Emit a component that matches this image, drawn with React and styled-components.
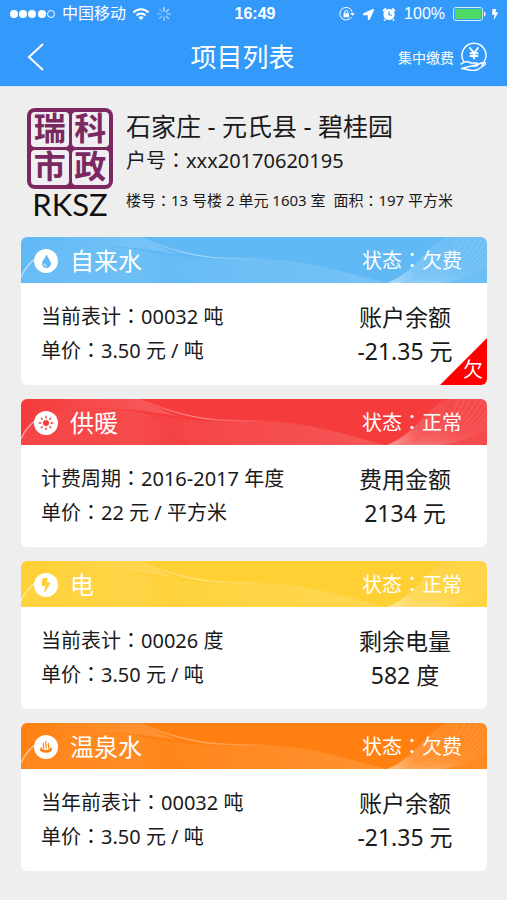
import React from 'react';
import styled, { createGlobalStyle } from 'styled-components';
import { FaTint, FaBolt, FaLocationArrow } from 'react-icons/fa';

const GlobalStyle = createGlobalStyle`
  * {
    box-sizing: border-box;
  }

  body {
    margin: 0;
    background: #eeeeee;
    color: #1a1a1a;
    font-family: 'Noto Sans', 'Noto Sans CJK SC', sans-serif;
  }

  h1, h2, p {
    margin: 0;
    font-weight: 400;
  }
`;

const Page = styled.div`
  min-height: 100vh;
  background: #eeeeee;
`;

const TopArea = styled.header`
  background: #3399fb;
  border-bottom: 1px solid #d5e6f8;
  color: #ffffff;
`;

const StatusBar = styled.div`
  display: grid;
  grid-template-columns: 1fr auto 1fr;
  align-items: center;
  height: 28px;
  padding: 0 7px 0 10px;
  font-family: 'Liberation Sans', 'Noto Sans CJK SC', sans-serif;
  font-size: 16px;
  line-height: 24px;
`;

const StatusGroup = styled.div`
  display: flex;
  align-items: center;
  justify-content: ${({ $end }) => ($end ? 'flex-end' : 'flex-start')};
  gap: ${({ $end }) => ($end ? '8px' : '6px')};
`;

const BatteryGroup = styled.span`
  display: flex;
  align-items: center;
  gap: 4px;
`;

const Clock = styled.strong`
  font-size: 16px;
`;

const NavBar = styled.nav`
  display: flex;
  align-items: center;
  justify-content: space-between;
  height: 58px;
  padding: 0 19px 0 20px;
`;

const NavButton = styled.button`
  display: flex;
  align-items: center;
  gap: 6px;
  min-width: 67px;
  padding: 0 0 0 ${({ $inset }) => ($inset ? '7px' : '0')};
  border: 0;
  background: none;
  color: inherit;
  font: inherit;
  font-size: 14px;
  cursor: pointer;
`;

const Title = styled.h1`
  font-size: 26px;
  line-height: 40px;
`;

const Main = styled.main`
  padding: 21px 20px 29px 21px;
`;

const Summary = styled.section`
  display: flex;
  gap: 13px;
  padding-left: 6px;
  margin-bottom: 18px;
`;

const Brand = styled.div`
  width: 86px;
  text-align: center;
`;

const Seal = styled.div`
  display: grid;
  grid-template-columns: 1fr 1fr;
  gap: 3px;
  padding: 4px;
  border-radius: 8px;
  background: #7b2860;
`;

const SealCell = styled.span`
  border-radius: 4px;
  background: #f0eef0;
  color: #7b2860;
  font-family: 'Liberation Sans', 'Noto Sans CJK SC', sans-serif;
  font-size: 32px;
  font-weight: 700;
  line-height: 35px;
`;

const BrandName = styled.p`
  color: #111111;
  font-family: Lato, sans-serif;
  font-size: 31px;
  line-height: 30px;
`;

const Place = styled.div`
  flex: 1;
`;

const PlaceName = styled.h2`
  font-size: 25px;
  line-height: 36px;
`;

const Account = styled.p`
  font-size: 20px;
  line-height: 34px;
`;

const Address = styled.p`
  margin-top: 8px;
  font-size: 15px;
  line-height: 28px;
  white-space: pre-wrap;
`;

const CardList = styled.div`
  display: flex;
  flex-direction: column;
  gap: 14px;
`;

const Card = styled.article`
  position: relative;
  overflow: hidden;
  border-radius: 6px;
  background: #ffffff;
`;

const CardHead = styled.div`
  position: relative;
  display: flex;
  align-items: center;
  height: 46px;
  padding: 2px 25px 0 13px;
  background: ${({ $color }) => $color};
  color: #ffffff;
`;

const WaveArt = styled.svg`
  position: absolute;
  inset: 0;
  width: 100%;
  height: 100%;
`;

const IconBadge = styled.span`
  position: relative;
  display: flex;
  align-items: center;
  justify-content: center;
  width: 24px;
  height: 24px;
  margin-right: 12px;
  border-radius: 50%;
  background: #ffffff;
  color: ${({ $color }) => $color};
`;

const CardTitle = styled.h2`
  position: relative;
  flex: 1;
  font-size: 24px;
  line-height: 36px;
`;

const CardStatus = styled.p`
  position: relative;
  font-size: 20px;
  line-height: 36px;
`;

const CardBody = styled.div`
  display: flex;
  justify-content: space-between;
  padding: 17px 0 17px 20px;
`;

const Details = styled.div`
  font-size: 20px;
  line-height: 34px;
`;

const Balance = styled.div`
  width: 164px;
  font-size: 23px;
  line-height: 34px;
  text-align: center;
`;

const OverdueCorner = styled.span`
  position: absolute;
  right: 0;
  bottom: 0;
  width: 47px;
  height: 47px;
  padding: 18px 4px 0 0;
  background: #fe0000;
  clip-path: polygon(100% 0, 100% 100%, 0 100%);
  color: #ffffff;
  font-size: 20px;
  line-height: 28px;
  text-align: right;
`;

// the full-width colon sits in the middle of its box in the TC face
const Colon = styled.span`
  font-family: 'Noto Sans CJK TC', sans-serif;
  line-height: 1;
`;

const Field = ({ label, children }) => (
  <>
    {label}
    <Colon>：</Colon>
    {children}
  </>
);

const Waves = ({ id }) => (
  <WaveArt viewBox="0 0 466 46" preserveAspectRatio="none" aria-hidden="true">
    <defs>
      <linearGradient id={`${id}-left`} x1="0" y1="0" x2="1" y2="0">
        <stop offset="0" stopColor="#fff" stopOpacity="0.05" />
        <stop offset="0.7" stopColor="#fff" stopOpacity="0.08" />
        <stop offset="1" stopColor="#fff" stopOpacity="0.02" />
      </linearGradient>
      <linearGradient id={`${id}-top`} x1="0" y1="0" x2="1" y2="0">
        <stop offset="0" stopColor="#fff" stopOpacity="0" />
        <stop offset="1" stopColor="#fff" stopOpacity="0.18" />
      </linearGradient>
      <linearGradient id={`${id}-mid`} x1="0" y1="0" x2="1" y2="0">
        <stop offset="0" stopColor="#fff" stopOpacity="0.04" />
        <stop offset="1" stopColor="#fff" stopOpacity="0.14" />
      </linearGradient>
      <linearGradient id={`${id}-edge`} x1="0" y1="0" x2="1" y2="0">
        <stop offset="0" stopColor="#fff" stopOpacity="0.1" />
        <stop offset="0.5" stopColor="#fff" stopOpacity="0.4" />
        <stop offset="1" stopColor="#fff" stopOpacity="0.05" />
      </linearGradient>
      <radialGradient id={`${id}-ray`} gradientUnits="userSpaceOnUse" cx="368" cy="46" r="70">
        <stop offset="0" stopColor="#fff" stopOpacity="0.5" />
        <stop offset="0.4" stopColor="#fff" stopOpacity="0.18" />
        <stop offset="1" stopColor="#fff" stopOpacity="0.08" />
      </radialGradient>
    </defs>
    <path d="M0 40 C12 18 40 10 80 10 C100 10 118 12 130 16 L168 46 H0Z" fill={`url(#${id}-left)`} />
    <path d="M0 0 H118 C135 8 146 14 160 18 C110 8 60 6 28 17 C12 22 5 30 0 40Z" fill={`url(#${id}-top)`} />
    <path d="M130 15 C165 23 200 23 236 22 C290 22 330 38 366 46 H168Z" fill={`url(#${id}-mid)`} />
    <path d="M0 40 C4 30 9 25 17 20" fill="none" stroke="#fff" strokeOpacity="0.5" strokeWidth="1.500" />
    <path d="M118 0 C160 18 190 24 245 21" fill="none" stroke={`url(#${id}-edge)`} strokeWidth="1.500" />
    <path d="M366 46 C392 36 402 14 424 0 H466 V46Z" fill={`url(#${id}-ray)`} />
    <g fill="none" stroke="#fff" strokeOpacity="0.18" strokeWidth="0.8">
      {[0, 1, 2, 3, 4, 5, 6, 7, 8, 9].map((step) => (
        <path key={step} d={`M${388 + step * 3} 46 Q${425 + step * 4} ${34 + step} ${438 + step * 6} 0`} />
      ))}
    </g>
  </WaveArt>
);

const SunIcon = () => (
  <svg width="16" height="16" viewBox="0 0 16 16" stroke="currentColor" strokeWidth="1.3" strokeLinecap="round" aria-hidden="true">
    <circle cx="8" cy="8" r="3" fill="currentColor" stroke="none" />
    <path d="M8 1.200 V3 M8 13 V14.800 M1.200 8 H3 M13 8 H14.800 M3.200 3.200 L4.400 4.400 M11.600 11.600 L12.800 12.800 M3.200 12.800 L4.400 11.600 M11.600 4.400 L12.800 3.200" />
  </svg>
);

const SpringIcon = () => (
  <svg width="16" height="16" viewBox="0 0 16 16" fill="none" stroke="currentColor" strokeWidth="1.200" strokeLinecap="round" aria-hidden="true">
    <path d="M5.500 4.500 C4.500 6 6.500 7 5.500 9 M8 2.500 C6.800 5 9.200 6 8 9 M10.500 4.500 C9.500 6 11.500 7 10.500 9" />
    <path d="M3.500 8.500 C1 9.500 1.500 13.500 8 13.500 C14.500 13.500 15 9.500 12.500 8.500 C12.500 12 3.500 12 3.500 8.500Z" fill="currentColor" strokeWidth="0.5" />
  </svg>
);

const WifiIcon = () => (
  <svg width="18" height="14" viewBox="0 0 18 14" fill="none" stroke="currentColor" strokeWidth="2" aria-hidden="true">
    <path d="M1.500 5.500 C5.500 1 12.500 1 16.500 5.500" />
    <path d="M4.500 8.500 C7 5.800 11 5.800 13.500 8.500" />
    <path d="M9 13 L6.300 10.300 Q9 8.400 11.700 10.300Z" fill="currentColor" stroke="none" />
  </svg>
);

const SpinnerIcon = () => (
  <svg width="16" height="16" viewBox="0 0 16 16" stroke="currentColor" strokeWidth="1.200" strokeLinecap="round" aria-hidden="true">
    {[0, 45, 90, 135, 180, 225, 270, 315].map((angle, index) => (
      <path key={angle} d="M8 1.500 V5" transform={`rotate(${angle} 8 8)`} opacity={0.9 - index * 0.08} />
    ))}
  </svg>
);

const RotationLockIcon = () => (
  <svg width="16" height="14" viewBox="0 0 16 14" fill="none" stroke="currentColor" aria-hidden="true">
    <path d="M13.200 5 A6.300 6.300 0 1 0 12.500 10" />
    <path d="M11.200 6 H15.800 L13.500 9Z" fill="currentColor" stroke="none" />
    <rect x="4.500" y="6.300" width="5.500" height="4" fill="currentColor" stroke="none" />
    <path d="M5.700 6.500 V5 A1.500 1.500 0 0 1 8.800 5 V6.500" />
  </svg>
);

const AlarmIcon = () => (
  <svg width="14" height="14" viewBox="0 0 14 14" aria-hidden="true">
    <circle cx="7" cy="7.500" r="5.600" fill="currentColor" />
    <path d="M1 4 L4 1.300 M10 1.300 L13 4 M3 12.500 L2 13.500 M11 12.500 L12 13.500" stroke="currentColor" strokeWidth="1.800" />
    <path d="M7 4.500 V8 H10" fill="none" stroke="#3399fb" strokeWidth="1.200" />
  </svg>
);

const BatteryIcon = () => (
  <svg width="33" height="14" viewBox="0 0 33 14" aria-hidden="true">
    <rect x="0.500" y="0.500" width="29" height="13" rx="2.500" fill="none" stroke="#d4ebff" />
    <rect x="2" y="2" width="26" height="10" rx="1" fill="#4cd964" />
    <path d="M31 4.500 C33 5 33 9 31 9.500Z" fill="#fff" />
  </svg>
);

const HandCoinIcon = () => (
  <svg width="28" height="30" viewBox="0 0 28 30" fill="none" stroke="currentColor" strokeWidth="1.400" strokeLinecap="round" strokeLinejoin="round" aria-hidden="true">
    <path d="M3.500 19 A12 12 0 1 1 24.500 19 M22 23.500 L24.500 20" />
    <path d="M10 6 L14 11 L18 6 M14 11 V16.500 M10.500 11.200 H17.500 M10.500 14 H17.500" strokeWidth="1.900" />
    <path d="M1 22 C5 18.500 8 19.500 11 21 H16 C18.500 21 18.500 24 16 24 H11 M17.500 22.500 L23 20.500 C25.500 19.500 26 22 24.500 23 L18 27.500 C14 29 8 28 5 27 L1.500 26.500Z" />
  </svg>
);

const CARDS = [
  {
    id: 'water',
    name: '自来水',
    color: '#60b9f5',
    icon: <FaTint size={13} />,
    status: '欠费',
    meterLabel: '当前表计',
    meter: '00032 吨',
    price: '3.50 元 / 吨',
    balanceLabel: '账户余额',
    balance: '-21.35 元',
    overdue: true,
  },
  {
    id: 'heating',
    name: '供暖',
    color: '#f53b3c',
    icon: <SunIcon />,
    status: '正常',
    meterLabel: '计费周期',
    meter: '2016-2017 年度',
    price: '22 元 / 平方米',
    balanceLabel: '费用金额',
    balance: '2134 元',
  },
  {
    id: 'power',
    name: '电',
    color: '#ffd034',
    icon: <FaBolt size={14} />,
    status: '正常',
    meterLabel: '当前表计',
    meter: '00026 度',
    price: '3.50 元 / 吨',
    balanceLabel: '剩余电量',
    balance: '582 度',
  },
  {
    id: 'spring',
    name: '温泉水',
    color: '#ff8010',
    icon: <SpringIcon />,
    status: '欠费',
    meterLabel: '当年前表计',
    meter: '00032 吨',
    price: '3.50 元 / 吨',
    balanceLabel: '账户余额',
    balance: '-21.35 元',
  },
];

const App = () => (
  <Page>
    <GlobalStyle />
    <TopArea>
      <StatusBar>
        <StatusGroup>
          <svg width="46" height="10" viewBox="0 0 46 10" fill="currentColor" aria-hidden="true">
            {[4, 13, 22, 32].map((cx) => (
              <circle key={cx} cx={cx} cy="5" r="4" />
            ))}
            <circle cx="41" cy="5" r="3.500" fill="none" stroke="currentColor" />
          </svg>
          <span>中国移动</span>
          <WifiIcon />
          <SpinnerIcon />
        </StatusGroup>
        <Clock>16:49</Clock>
        <StatusGroup $end>
          <RotationLockIcon />
          <FaLocationArrow size={11} />
          <AlarmIcon />
          <span>100%</span>
          <BatteryGroup>
            <BatteryIcon />
            <FaBolt size={10} />
          </BatteryGroup>
        </StatusGroup>
      </StatusBar>
      <NavBar>
        <NavButton $inset aria-label="返回">
          <svg width="18" height="30" viewBox="0 0 18 30" fill="none" stroke="currentColor" strokeWidth="2" aria-hidden="true">
            <path d="M16 2 L2 15 L16 28" />
          </svg>
        </NavButton>
        <Title>项目列表</Title>
        <NavButton>
          集中缴费
          <HandCoinIcon />
        </NavButton>
      </NavBar>
    </TopArea>
    <Main>
      <Summary>
        <Brand>
          <Seal>
            {['瑞', '科', '市', '政'].map((char) => (
              <SealCell key={char}>{char}</SealCell>
            ))}
          </Seal>
          <BrandName>RKSZ</BrandName>
        </Brand>
        <Place>
          <PlaceName>石家庄 - 元氏县 - 碧桂园</PlaceName>
          <Account><Field label="户号">xxx20170620195</Field></Account>
          <Address>
            <Field label="楼号">13 号楼 2 单元 1603 室{'  '}</Field>
            <Field label="面积">197 平方米</Field>
          </Address>
        </Place>
      </Summary>
      <CardList>
        {CARDS.map((card) => (
          <Card key={card.id}>
            <CardHead $color={card.color}>
              <Waves id={card.id} />
              <IconBadge $color={card.color}>{card.icon}</IconBadge>
              <CardTitle>{card.name}</CardTitle>
              <CardStatus><Field label="状态">{card.status}</Field></CardStatus>
            </CardHead>
            <CardBody>
              <Details>
                <p><Field label={card.meterLabel}>{card.meter}</Field></p>
                <p><Field label="单价">{card.price}</Field></p>
              </Details>
              <Balance>
                <p>{card.balanceLabel}</p>
                <p>{card.balance}</p>
              </Balance>
            </CardBody>
            {card.overdue && <OverdueCorner>欠</OverdueCorner>}
          </Card>
        ))}
      </CardList>
    </Main>
  </Page>
);

export default App;
